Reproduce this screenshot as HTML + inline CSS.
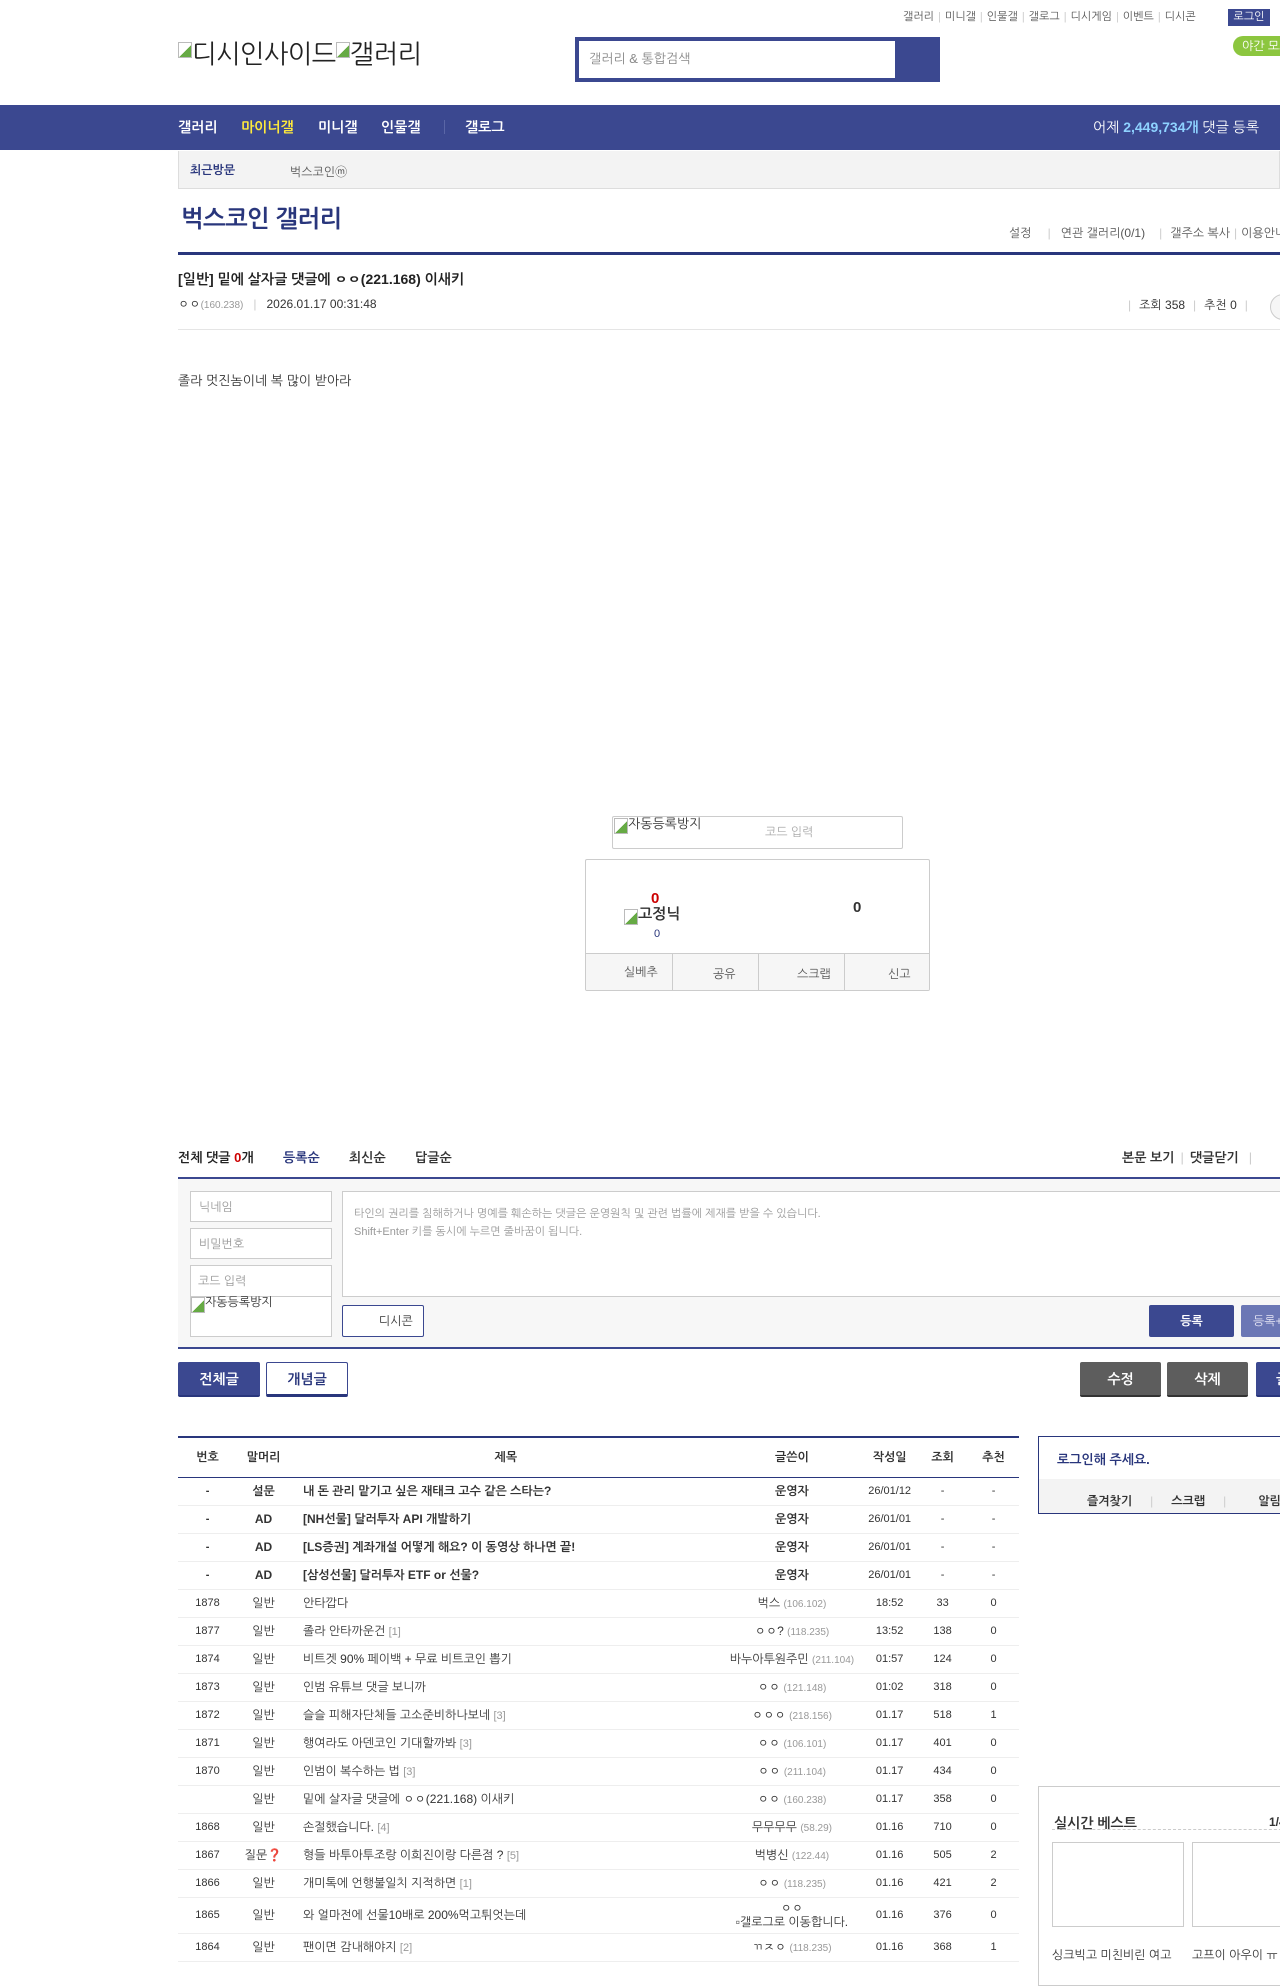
<!DOCTYPE html>
<html><head><meta charset="utf-8"><style>
*{margin:0;padding:0;box-sizing:border-box}
body{width:1280px;height:1960px;overflow:hidden;position:relative;background:#fff;font-family:"Liberation Sans","NanumGothic","Noto Sans CJK KR",sans-serif;color:#333;font-size:12px}
.a{position:absolute;white-space:nowrap}
.b{font-weight:bold}
table{border-collapse:collapse;position:absolute;left:178px;top:1436px;width:841px;font-size:12px}
th{height:40px;font-weight:bold;color:#333;border-top:2px solid #29367c;border-bottom:1px solid #29367c}
td{height:28px;text-align:center;border-bottom:1px solid #eee;color:#333}
td.t{text-align:left;padding-left:13px}
td.n,td.d,td.v,td.r{font-size:11px}
.ip{color:#999;font-size:10px}
.rc{color:#999;font-size:11px}
tr.bo td{font-weight:bold}
.sep{color:#ccc;margin:0 4px}
.bi{display:inline-block;width:14px;height:16px;border:1px solid #bbb;background:linear-gradient(135deg,#fff 55%,#6a4 55%);vertical-align:top;margin-top:4px}
</style></head><body>
<!-- top links -->
<div class="a" style="left:903px;top:10px;font-size:11px;color:#555">갤러리<span class="sep">|</span>미니갤<span class="sep">|</span>인물갤<span class="sep">|</span>갤로그<span class="sep">|</span>디시게임<span class="sep">|</span>이벤트<span class="sep">|</span>디시콘</div>
<div class="a" style="left:1228px;top:9px;width:42px;height:17px;background:#3b4890;color:#fff;font-size:11px;text-align:center;line-height:17px">로그인</div>
<div class="a" style="left:1233px;top:36px;width:60px;height:20px;background:#8cc63f;color:#fff;font-size:12px;line-height:20px;padding-left:9px;border-radius:10px">야간 모드</div>
<div class="a" style="left:178px;top:38px;font-size:26px;color:#222;letter-spacing:-0.5px"><span class="bi"></span>디시인사이드<span class="bi"></span>갤러리</div>
<div class="a" style="left:575px;top:37px;width:365px;height:45px;background:#3b4890"></div>
<div class="a" style="left:579px;top:41px;width:316px;height:37px;background:#fff;color:#888;font-size:13px;padding:10px 10px">갤러리 &amp; 통합검색</div>
<!-- nav -->
<div class="a" style="left:0;top:105px;width:1280px;height:45px;background:#3b4890"></div>
<div class="a b" style="left:178px;top:119px;font-size:14px;color:#fff">갤러리</div>
<div class="a b" style="left:241px;top:119px;font-size:14px;color:#ffea3b">마이너갤</div>
<div class="a b" style="left:318px;top:119px;font-size:14px;color:#fff">미니갤</div>
<div class="a b" style="left:381px;top:119px;font-size:14px;color:#fff">인물갤</div>
<div class="a" style="left:444px;top:120px;width:1px;height:14px;background:#5a66a6"></div>
<div class="a b" style="left:465px;top:119px;font-size:14px;color:#fff">갤로그</div>
<div class="a" style="left:1093px;top:119px;font-size:14px;color:#fff">어제 <b style="color:#8ed2ff">2,449,734개</b> 댓글 등록</div>
<div class="a" style="left:178px;top:151px;width:1102px;height:38px;background:#f3f3f3;border:1px solid #ddd;border-top:0"></div>
<div class="a b" style="left:190px;top:163px;font-size:12px;color:#29367c">최근방문</div>
<div class="a" style="left:290px;top:163px;font-size:12px;color:#555">벅스코인ⓜ</div>
<!-- gallery title -->
<div class="a b" style="left:181px;top:206px;font-size:24px;color:#29367c;letter-spacing:-0.5px">벅스코인 갤러리</div>
<div class="a" style="left:1009px;top:226px;font-size:12px;color:#555">설정<span class="sep" style="margin:0 10px 0 16px">|</span>연관 갤러리(0/1)<span class="sep" style="margin:0 8px 0 14px">|</span>갤주소 복사<span class="sep">|</span>이용안내</div>
<div class="a" style="left:178px;top:252px;width:1102px;height:3px;background:#29367c"></div>
<div class="a b" style="left:178px;top:271px;font-size:14px;color:#222">[일반] 밑에 살자글 댓글에 ㅇㅇ(221.168) 이새키</div>
<div class="a" style="left:178px;top:297px;font-size:12px;color:#333">ㅇㅇ<span class="ip">(160.238)</span><span class="sep" style="margin:0 10px">|</span>2026.01.17 00:31:48</div>
<div class="a" style="left:1128px;top:298px;font-size:12px;color:#333"><span class="sep" style="margin:0 8px 0 0">|</span>조회 358<span class="sep" style="margin:0 8px">|</span>추천 0<span class="sep" style="margin:0 8px">|</span></div>
<div class="a" style="left:1270px;top:294px;width:26px;height:26px;border:1px solid #ccc;border-radius:50%;background:#f6f6f6"></div>
<div class="a" style="left:178px;top:329px;width:1102px;height:1px;background:#e5e5e5"></div>
<div class="a" style="left:178px;top:373px;font-size:13px;color:#333">졸라 멋진놈이네 복 많이 받아라</div>
<!-- captcha -->
<div class="a" style="left:612px;top:816px;width:291px;height:33px;border:1px solid #ccc;border-radius:2px"></div>
<div class="a" style="left:614px;top:816px;font-size:13px;color:#333"><span class="bi" style="margin-top:2px"></span>자동등록방지</div>
<div class="a" style="left:765px;top:825px;font-size:12px;color:#aaa">코드 입력</div>
<!-- recommend box -->
<div class="a" style="left:585px;top:859px;width:345px;height:132px;border:1px solid #ccc;border-radius:2px;overflow:hidden">
 <div style="position:absolute;left:0;top:93px;width:345px;height:39px;background:#f6f6f6;border-top:1px solid #ccc"></div>
 <div style="position:absolute;left:86px;top:93px;width:1px;height:39px;background:#ccc"></div>
 <div style="position:absolute;left:172px;top:93px;width:1px;height:39px;background:#ccc"></div>
 <div style="position:absolute;left:258px;top:93px;width:1px;height:39px;background:#ccc"></div>
 <div style="position:absolute;left:38px;top:105px;font-size:12px;color:#555">실베추</div>
 <div style="position:absolute;left:127px;top:107px;font-size:12px;color:#555">공유</div>
 <div style="position:absolute;left:211px;top:107px;font-size:12px;color:#555">스크랩</div>
 <div style="position:absolute;left:302px;top:107px;font-size:12px;color:#555">신고</div>
 <div style="position:absolute;left:65px;top:30px;font-size:15px;font-weight:bold;color:#c00">0</div>
 <div style="position:absolute;left:38px;top:46px;font-size:15px;font-weight:bold;color:#333"><span class="bi" style="margin-top:3px"></span>고정닉</div>
 <div style="position:absolute;left:68px;top:68px;font-size:11px;color:#29367c">0</div>
 <div style="position:absolute;left:267px;top:39px;font-size:15px;font-weight:bold;color:#333">0</div>
</div>
<!-- comments -->
<div class="a b" style="left:178px;top:1150px;font-size:13px;color:#222">전체 댓글 <span style="color:#c00">0</span>개</div>
<div class="a b" style="left:283px;top:1150px;font-size:13px;color:#29367c">등록순</div>
<div class="a b" style="left:349px;top:1150px;font-size:13px;color:#333">최신순</div>
<div class="a b" style="left:415px;top:1150px;font-size:13px;color:#333">답글순</div>
<div class="a b" style="left:1122px;top:1150px;font-size:13px;color:#333">본문 보기<span class="sep" style="margin:0 6px;font-weight:normal">|</span>댓글닫기<span class="sep" style="margin:0 10px;font-weight:normal">|</span></div>
<div class="a" style="left:178px;top:1177px;width:1102px;height:172px;background:#f7f7f7;border-top:2px solid #3b4890;border-bottom:2px solid #3b4890"></div>
<div class="a" style="left:190px;top:1191px;width:142px;height:31px;border:1px solid #ccc;background:#fff;color:#999;font-size:12px;padding:8px 8px">닉네임</div>
<div class="a" style="left:190px;top:1228px;width:142px;height:31px;border:1px solid #ccc;background:#fff;color:#999;font-size:12px;padding:8px 8px">비밀번호</div>
<div class="a" style="left:190px;top:1265px;width:142px;height:72px;border:1px solid #ccc;background:#fff"></div>
<div class="a" style="left:190px;top:1265px;width:142px;height:32px;border-bottom:1px solid #ccc;color:#999;font-size:12px;padding:9px 8px">코드 입력</div>
<div class="a" style="left:191px;top:1295px;font-size:12px;color:#333"><span class="bi" style="margin-top:2px"></span>자동등록방지</div>
<div class="a" style="left:342px;top:1191px;width:950px;height:106px;border:1px solid #ccc;background:#fff;color:#999;font-size:11px;line-height:18px;padding:13px 11px">타인의 권리를 침해하거나 명예를 훼손하는 댓글은 운영원칙 및 관련 법률에 제재를 받을 수 있습니다.<br>Shift+Enter 키를 동시에 누르면 줄바꿈이 됩니다.</div>
<div class="a" style="left:342px;top:1305px;width:82px;height:32px;border:1px solid #3b4890;border-radius:2px;background:#fff;color:#333;font-size:12px;padding:8px 0 0 36px">디시콘</div>
<div class="a b" style="left:1149px;top:1305px;width:85px;height:32px;background:#3b4890;color:#fff;font-size:12px;text-align:center;line-height:32px;border-radius:2px">등록</div>
<div class="a" style="left:1241px;top:1305px;width:85px;height:32px;background:#6b77b5;color:#e6e6f5;font-size:12px;padding:9px 12px;border-radius:2px">등록+추천</div>
<!-- buttons -->
<div class="a b" style="left:178px;top:1362px;width:82px;height:35px;background:#3b4890;color:#fff;font-size:14px;text-align:center;line-height:34px;border-bottom:2px solid #29367c;border-radius:2px">전체글</div>
<div class="a b" style="left:266px;top:1362px;width:82px;height:35px;background:#fff;color:#29367c;font-size:14px;text-align:center;line-height:32px;border:1px solid #3b4890;border-bottom:3px solid #29367c;border-radius:2px">개념글</div>
<div class="a b" style="left:1080px;top:1362px;width:81px;height:35px;background:#5d5d5d;color:#fff;font-size:14px;text-align:center;line-height:34px;border-bottom:2px solid #333;border-radius:2px">수정</div>
<div class="a b" style="left:1167px;top:1362px;width:81px;height:35px;background:#5d5d5d;color:#fff;font-size:14px;text-align:center;line-height:34px;border-bottom:2px solid #333;border-radius:2px">삭제</div>
<div class="a b" style="left:1256px;top:1362px;width:81px;height:35px;background:#3b4890;color:#fff;font-size:14px;line-height:34px;padding-left:20px;border-bottom:2px solid #29367c;border-radius:2px">글쓰기</div>
<!-- table -->
<table>
<colgroup><col style="width:58px"><col style="width:52px"><col style="width:424px"><col style="width:138px"><col style="width:54px"><col style="width:50px"><col style="width:50px"></colgroup>
<tr><th>번호</th><th>말머리</th><th>제목</th><th>글쓴이</th><th>작성일</th><th>조회</th><th>추천</th></tr>
<tr class="bo"><td class="n">-</td><td>설문</td><td class="t">내 돈 관리 맡기고 싶은 재태크 고수 같은 스타는?</td><td>운영자</td><td class="d" style="font-weight:normal">26/01/12</td><td class="v" style="font-weight:normal">-</td><td class="r" style="font-weight:normal">-</td></tr>
<tr class="bo"><td class="n">-</td><td>AD</td><td class="t">[NH선물] 달러투자 API 개발하기</td><td>운영자</td><td class="d" style="font-weight:normal">26/01/01</td><td class="v" style="font-weight:normal">-</td><td class="r" style="font-weight:normal">-</td></tr>
<tr class="bo"><td class="n">-</td><td>AD</td><td class="t">[LS증권] 계좌개설 어떻게 해요? 이 동영상 하나면 끝!</td><td>운영자</td><td class="d" style="font-weight:normal">26/01/01</td><td class="v" style="font-weight:normal">-</td><td class="r" style="font-weight:normal">-</td></tr>
<tr class="bo"><td class="n">-</td><td>AD</td><td class="t">[삼성선물] 달러투자 ETF or 선물?</td><td>운영자</td><td class="d" style="font-weight:normal">26/01/01</td><td class="v" style="font-weight:normal">-</td><td class="r" style="font-weight:normal">-</td></tr>
<tr><td class="n">1878</td><td>일반</td><td class="t">안타깝다</td><td>벅스 <span class="ip">(106.102)</span></td><td class="d">18:52</td><td class="v">33</td><td class="r">0</td></tr>
<tr><td class="n">1877</td><td>일반</td><td class="t">졸라 안타까운건 <span class="rc">[1]</span></td><td>ㅇㅇ? <span class="ip">(118.235)</span></td><td class="d">13:52</td><td class="v">138</td><td class="r">0</td></tr>
<tr><td class="n">1874</td><td>일반</td><td class="t">비트겟 90% 페이백 + 무료 비트코인 뽑기</td><td>바누아투원주민 <span class="ip">(211.104)</span></td><td class="d">01:57</td><td class="v">124</td><td class="r">0</td></tr>
<tr><td class="n">1873</td><td>일반</td><td class="t">인범 유튜브 댓글 보니까</td><td>ㅇㅇ <span class="ip">(121.148)</span></td><td class="d">01:02</td><td class="v">318</td><td class="r">0</td></tr>
<tr><td class="n">1872</td><td>일반</td><td class="t">슬슬 피해자단체들 고소준비하나보네 <span class="rc">[3]</span></td><td>ㅇㅇㅇ <span class="ip">(218.156)</span></td><td class="d">01.17</td><td class="v">518</td><td class="r">1</td></tr>
<tr><td class="n">1871</td><td>일반</td><td class="t">행여라도 아덴코인 기대할까봐 <span class="rc">[3]</span></td><td>ㅇㅇ <span class="ip">(106.101)</span></td><td class="d">01.17</td><td class="v">401</td><td class="r">0</td></tr>
<tr><td class="n">1870</td><td>일반</td><td class="t">인범이 복수하는 법 <span class="rc">[3]</span></td><td>ㅇㅇ <span class="ip">(211.104)</span></td><td class="d">01.17</td><td class="v">434</td><td class="r">0</td></tr>
<tr><td class="n"></td><td>일반</td><td class="t">밑에 살자글 댓글에 ㅇㅇ(221.168) 이새키</td><td>ㅇㅇ <span class="ip">(160.238)</span></td><td class="d">01.17</td><td class="v">358</td><td class="r">0</td></tr>
<tr><td class="n">1868</td><td>일반</td><td class="t">손절했습니다. <span class="rc">[4]</span></td><td>무무무무 <span class="ip">(58.29)</span></td><td class="d">01.16</td><td class="v">710</td><td class="r">0</td></tr>
<tr><td class="n">1867</td><td>질문<span style="color:#d22">❓</span></td><td class="t">형들 바투아투조랑 이희진이랑 다른점 ? <span class="rc">[5]</span></td><td>벅병신 <span class="ip">(122.44)</span></td><td class="d">01.16</td><td class="v">505</td><td class="r">2</td></tr>
<tr><td class="n">1866</td><td>일반</td><td class="t">개미톡에 언행불일치 지적하면 <span class="rc">[1]</span></td><td>ㅇㅇ <span class="ip">(118.235)</span></td><td class="d">01.16</td><td class="v">421</td><td class="r">2</td></tr>
<tr><td class="n" style="height:36px">1865</td><td>일반</td><td class="t">와 얼마전에 선물10배로 200%먹고튀엇는데</td><td style="line-height:14px">ㅇㅇ<br>▫갤로그로 이동합니다.</td><td class="d">01.16</td><td class="v">376</td><td class="r">0</td></tr>
<tr><td class="n">1864</td><td>일반</td><td class="t">팬이면 감내해야지 <span class="rc">[2]</span></td><td>ㄲㅈㅇ <span class="ip">(118.235)</span></td><td class="d">01.16</td><td class="v">368</td><td class="r">1</td></tr>
</table>
<!-- sidebar -->
<div class="a" style="left:1038px;top:1436px;width:260px;height:78px;border:1px solid #29367c;background:#fff"></div>
<div class="a" style="left:1039px;top:1479px;width:260px;height:34px;background:#f3f3f3"></div>
<div class="a b" style="left:1057px;top:1452px;font-size:13px;color:#29367c">로그인해 주세요.</div>
<div class="a b" style="left:1087px;top:1494px;font-size:12px;color:#333">즐겨찾기<span class="sep" style="margin:0 18px;font-weight:normal">|</span>스크랩<span class="sep" style="margin:0 32px 0 18px;font-weight:normal">|</span>알림</div>
<div class="a" style="left:1038px;top:1786px;width:260px;height:200px;border:1px solid #ccc"></div>
<div class="a b" style="left:1054px;top:1815px;font-size:14px;color:#333">실시간 베스트</div>
<div class="a b" style="left:1269px;top:1815px;font-size:12px;color:#333">1/4</div>
<div class="a" style="left:1052px;top:1829px;width:240px;border-top:1px dashed #ccc"></div>
<div class="a" style="left:1052px;top:1842px;width:132px;height:85px;border:1px solid #ccc"></div>
<div class="a" style="left:1192px;top:1842px;width:132px;height:85px;border:1px solid #ccc"></div>
<div class="a" style="left:1052px;top:1948px;font-size:12px;color:#333">싱크빅고 미친비린 여고</div>
<div class="a" style="left:1192px;top:1948px;font-size:12px;color:#333">고프이 아우이 ㅠ</div>
</body></html>
